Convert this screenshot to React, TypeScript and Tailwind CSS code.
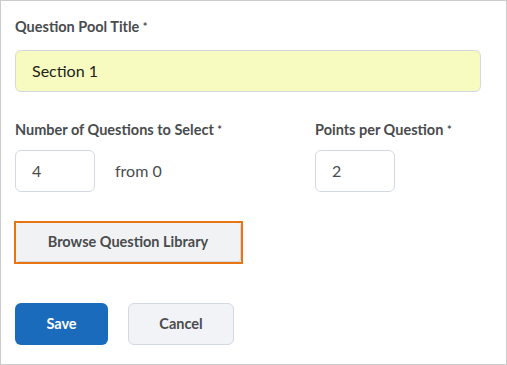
export default function App() {
  return (
    <div
      className="w-[507px] h-[365px] bg-white border border-[#cccccc] text-[#494c4e]"
      style={{ fontFamily: 'Lato, "Open Sans", sans-serif' }}
    >
      <div className="pl-[14px] pt-[16px]">
        <label className="block text-[14.5px] font-bold leading-[20px]">
          Question Pool Title <span className="text-[11px] align-top">*</span>
        </label>
        <div className="mt-[13px] w-[466px] h-[42px] rounded-[6px] border border-[#d3d9e3] bg-[#f8fbbf] flex items-center pl-[16px] text-[16px] text-[#202122]">
          Section 1
        </div>

        <div className="mt-[28px] flex">
          <div className="w-[300px]">
            <label className="block text-[14.5px] font-bold leading-[20px]">
              Number of Questions to Select <span className="text-[11px] align-top">*</span>
            </label>
            <div className="mt-[10px] flex items-center">
              <div className="w-[80px] h-[42px] rounded-[6px] border border-[#d3d9e3] bg-white flex items-center pl-[16px] text-[16px] text-[#494c4e]">
                4
              </div>
              <span className="ml-[20px] text-[16px]">from 0</span>
            </div>
          </div>
          <div>
            <label className="block text-[14.5px] font-bold leading-[20px]">
              Points per Question <span className="text-[11px] align-top">*</span>
            </label>
            <div className="mt-[10px] w-[80px] h-[42px] rounded-[6px] border border-[#d3d9e3] bg-white flex items-center pl-[16px] text-[16px] text-[#494c4e]">
              2
            </div>
          </div>
        </div>

        <div className="mt-[29px] w-[229px] h-[43px] border-2 border-[#e87511] -ml-px">
          <button
            type="button"
            className="w-full h-full bg-[#f1f2f4] border-r border-b border-[#d3d9e3] rounded-[3px] text-[14.5px] font-bold text-[#494c4e]"
          >
            Browse Question Library
          </button>
        </div>

        <div className="mt-[39px] flex gap-[20px]">
          <button
            type="button"
            className="w-[93px] h-[42px] rounded-[6px] bg-[#1a6bbc] text-white text-[14.5px] font-bold"
          >
            Save
          </button>
          <button
            type="button"
            className="w-[106px] h-[42px] rounded-[6px] bg-[#f1f3f6] border border-[#d3d9e3] text-[14.5px] font-bold text-[#494c4e]"
          >
            Cancel
          </button>
        </div>
      </div>
    </div>
  )
}
